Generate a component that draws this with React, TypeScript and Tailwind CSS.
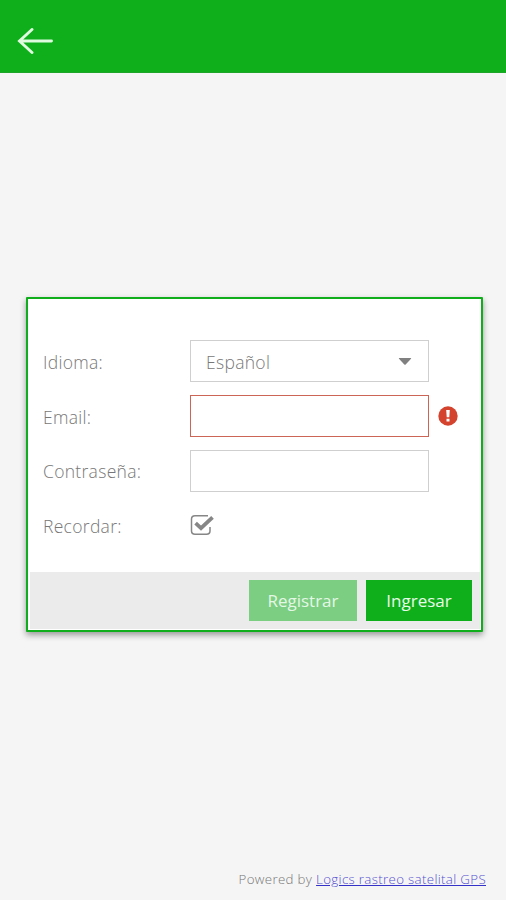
import type { ReactNode } from 'react';

interface FieldRowProps {
  label: string;
  children: ReactNode;
}

function FieldRow({ label, children }: FieldRowProps) {
  return (
    <div className="flex h-[42px] items-center">
      <label className="w-[147px] shrink-0 pt-0.5">{label}</label>
      {children}
    </div>
  );
}

export default function App() {
  return (
    <div className="flex h-[900px] w-[506px] flex-col bg-[#f5f5f5] font-['Open_Sans',sans-serif] text-[17.5px] font-light tracking-[0.3px] text-[#777]">
      <header className="flex h-[73px] shrink-0 items-center border-b border-[#1fa52a] bg-[#0faf1c] pt-[9px] pl-[17px]">
        <button aria-label="Volver">
          <svg width="37" height="26" viewBox="0 0 37 26" fill="none" stroke="#e0fae0" strokeWidth="2.9" strokeLinecap="round">
            <path d="M15 1.5L2.5 13L15 24.5M3 13H34.5" />
          </svg>
        </button>
      </header>

      <main className="mt-[224px] ml-[26px] flex h-[335px] w-[457px] shrink-0 flex-col rounded-[1px] border-2 border-[#10ad1c] bg-white shadow-[0_3px_6px_rgba(0,0,0,0.38)]">
        <form className="flex flex-1 flex-col gap-[12.8px] pt-[41px] pl-[15px]">
          <FieldRow label="Idioma:">
            <div className="flex h-[42px] w-[239px] items-center justify-between border border-[#cfcfcf] pr-[16px] pl-[15px]">
              <span className="pt-0.5">Español</span>
              <svg width="14" height="7" viewBox="0 0 13 7" fill="#808080">
                <path d="M0.8 0H12.2Q13 0 12.5 0.8L7.2 6.5Q6.5 7.1 5.8 6.5L0.5 0.8Q0 0 0.8 0Z" />
              </svg>
            </div>
          </FieldRow>
          <FieldRow label="Email:">
            <input className="h-[42px] w-[239px] border border-[#cd6557] px-[15px] outline-none" />
            <svg className="ml-[9px]" width="20" height="20" viewBox="0 0 20 20">
              <circle cx="10" cy="10" r="9.7" fill="#d3432e" />
              <path d="M8.2 4H11.8L11.3 11.3H8.7ZM8.5 12.8H11.5V15.6H8.5Z" fill="#fff" />
            </svg>
          </FieldRow>
          <FieldRow label="Contraseña:">
            <input type="password" className="h-[42px] w-[239px] border border-[#cfcfcf] px-[15px] outline-none" />
          </FieldRow>
          <FieldRow label="Recordar:">
            <svg width="25" height="22" viewBox="0 0 25 22" fill="none" stroke="#868686">
              <path d="M18 1.7H5Q1.5 1.7 1.5 5V17Q1.5 20.2 5 20.2H16.5Q20 20.2 20 17V13" strokeWidth="1.5" />
              <path d="M5.6 9.2L11 14.2L22.5 3.3" strokeWidth="3.8" />
            </svg>
          </FieldRow>
        </form>

        <footer className="mr-px mb-px ml-[2px] flex h-[57px] shrink-0 items-center justify-end gap-[9px] bg-[#ebebeb] pr-[8px] text-[17px] font-normal tracking-normal">
          <button className="h-[41px] w-[108px] bg-[#7bce82] text-[#e4f7e5]">Registrar</button>
          <button className="h-[41px] w-[106px] bg-[#0faf1c] text-[#e9fbe9]">Ingresar</button>
        </footer>
      </main>

      <p className="mt-auto mr-5 mb-[11px] text-right text-[13.3px] leading-5 tracking-[0.33px]">
        Powered by{' '}
        <a href="#" className="text-[#5552cf] underline decoration-[#3431c9]">
          Logics rastreo satelital GPS
        </a>
      </p>
    </div>
  );
}
